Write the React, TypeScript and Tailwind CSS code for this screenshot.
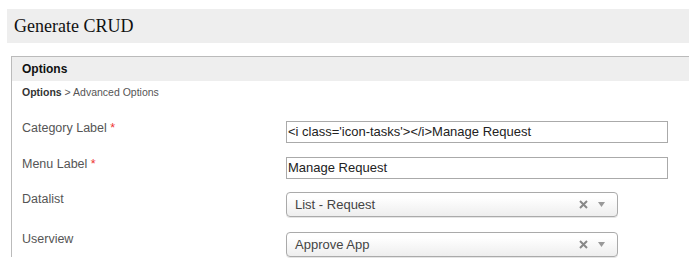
import { ReactNode } from "react";

function Row({ label, required, top, pad, children }: { label: string; required?: boolean; top: string; pad: string; children: ReactNode }) {
  return (
    <div className={`flex items-start ${top}`}>
      <div className={`w-[274px] shrink-0 pl-[10px] text-[12.5px] leading-[16px] text-[#555] ${pad}`}>
        {label}
        {required && <span className="text-[#e33]"> *</span>}
      </div>
      {children}
    </div>
  );
}

function TextInput({ value }: { value: string }) {
  return (
    <div className="mt-[3px] flex h-[22px] w-[382px] items-center border border-[#aaa] bg-white px-[1px] text-[13px] text-[#222]">
      {value}
    </div>
  );
}

function Select({ value }: { value: string }) {
  return (
    <div className="mt-[5px] flex h-[25px] w-[332px] items-center rounded-[4px] border border-[#aaa] bg-gradient-to-b from-white from-20% to-[#eeeeee] pl-[8px] pr-[12px] text-[13px] text-[#444] shadow-[0_1px_0_#e5e5e5]">
      <span className="flex-1">{value}</span>
      <svg width="9" height="9" viewBox="0 0 9 9" className="mr-[10px]">
        <path d="M1 1 L8 8 M8 1 L1 8" stroke="#888" strokeWidth="2" />
      </svg>
      <svg width="7" height="5" viewBox="0 0 7 5">
        <path d="M0 0 L7 0 L3.5 5 Z" fill="#999" />
      </svg>
    </div>
  );
}

export default function App() {
  return (
    <div className="h-[276px] w-[689px] overflow-hidden bg-white pl-[7px] pt-[9px] font-['Liberation_Sans',Arial,sans-serif]">
      {/* Page header */}
      <div className="flex h-[34px] items-center bg-[#eeeeee] pl-[7px] font-['Liberation_Serif',serif] text-[18px] text-[#111]">
        Generate CRUD
      </div>

      {/* Options panel */}
      <div className="ml-[4px] mt-[13px] w-[720px] border-l border-t border-[#bbbbbb]">
        <div className="flex h-[24px] items-center bg-[#eeeeee] pl-[10px] text-[12px] font-bold text-[#111]">
          Options
        </div>
        <div className="pl-[10px] pt-[5px] text-[10.5px] leading-[12px] text-[#555]">
          <span className="font-bold text-[#333]">Options</span> &gt; Advanced Options
        </div>

        <Row label="Category Label" required top="mt-[20px]" pad="pt-[2px]">
          <TextInput value="<i class='icon-tasks'></i>Manage Request" />
        </Row>
        <Row label="Menu Label" required top="mt-[11px]" pad="pt-[2px]">
          <TextInput value="Manage Request" />
        </Row>
        <Row label="Datalist" top="mt-[8px]" pad="pt-[4px]">
          <Select value="List - Request" />
        </Row>
        <Row label="Userview" top="mt-[10px]" pad="pt-[4px]">
          <Select value="Approve App" />
        </Row>
      </div>
    </div>
  );
}
